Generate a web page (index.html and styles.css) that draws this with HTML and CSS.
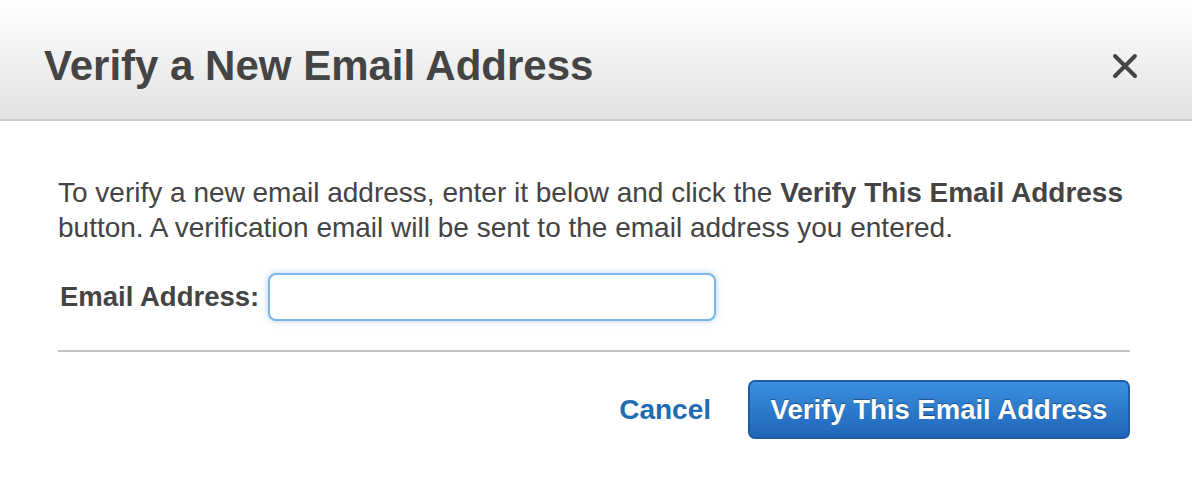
FILE: index.html
```html
<!DOCTYPE html>
<html lang="en">
<head>
  <meta charset="UTF-8">
  <title>Verify a New Email Address</title>
  <link rel="stylesheet" href="styles.css">
</head>
<body>

  <div class="dialog">
    <!-- Header -->
    <div class="dialog-header">
      <h1>Verify a New Email Address</h1>
      <button class="close" aria-label="Close">
        <svg width="26" height="26" viewBox="0 0 26 26">
          <path d="M3 3 L23 23 M23 3 L3 23" stroke="#444" stroke-width="4" stroke-linecap="round" fill="none"/>
        </svg>
      </button>
    </div>

    <!-- Body -->
    <div class="dialog-body">
      <p class="intro">To verify a new email address, enter it below and click the <b>Verify This Email Address</b> button. A verification email will be sent to the email address you entered.</p>

      <div class="field">
        <label for="emailInput">Email Address:</label>
        <input type="text" id="emailInput">
      </div>

      <hr>

      <div class="actions">
        <a href="#" class="cancel">Cancel</a>
        <button class="primary">Verify This Email Address</button>
      </div>
    </div>
  </div>

</body>
</html>
```

FILE: styles.css
```css
* {
  box-sizing: border-box;
}

body {
  margin: 0;
  background: white;
  font-family: 'Liberation Sans', Arial, sans-serif;
  color: #444;
}

.dialog {
  width: 1192px;
  height: 480px;
  background: white;
}

.dialog-header {
  height: 121px;
  display: flex;
  align-items: center;
  justify-content: space-between;
  padding: 12px 54px 0 44px;
  background: linear-gradient(to bottom, #ffffff, #e2e2e2);
  border-bottom: 2px solid #cdcdcd;
}

.dialog-header h1 {
  margin: 0;
  font-size: 42px;
  font-weight: bold;
  color: #444;
}

.close {
  border: none;
  background: none;
  padding: 0;
  width: 26px;
  height: 26px;
  cursor: pointer;
  display: flex;
}

.dialog-body {
  padding: 54px 62px 0 58px;
}

.intro {
  margin: 0;
  font-size: 28px;
  line-height: 35px;
}

.field {
  display: flex;
  align-items: center;
  gap: 9px;
  margin-top: 28px;
  padding-left: 2px;
}

.field label {
  font-size: 27.5px;
  font-weight: bold;
}

.field input {
  width: 448px;
  height: 48px;
  border: 2px solid #7ab6e8;
  border-radius: 8px;
  box-shadow: 0 0 6px rgba(102, 170, 235, 0.5);
  font-size: 24px;
  padding: 0 10px;
  outline: none;
}

hr {
  margin: 29px 0 0;
  border: none;
  border-top: 2px solid #c4c4c4;
}

.actions {
  display: flex;
  justify-content: flex-end;
  align-items: center;
  gap: 37px;
  margin-top: 28px;
}

.cancel {
  font-size: 28px;
  font-weight: bold;
  color: #1f6cb3;
  text-decoration: none;
}

.primary {
  width: 382px;
  height: 59px;
  border: 2px solid #1d5da6;
  border-radius: 7px;
  background: linear-gradient(to bottom, #3b8fe0, #1f66b9);
  color: white;
  font-family: inherit;
  font-size: 27.5px;
  font-weight: bold;
  text-shadow: 0 -1px 1px rgba(0, 0, 0, 0.35);
  cursor: pointer;
}
```
